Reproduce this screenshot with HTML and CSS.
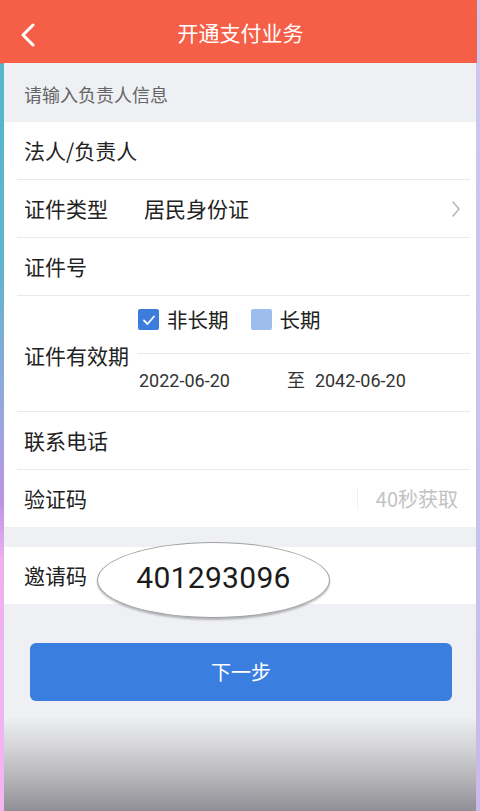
FILE: index.html
```html
<!DOCTYPE html>
<html lang="zh-CN">
<head>
<meta charset="utf-8">
<title>开通支付业务</title>
<link rel="stylesheet" href="styles.css">
</head>
<body>
<div class="frame">
  <div class="edge edge-l"></div>
  <div class="screen">
    <header class="nav">
      <svg class="back" width="16" height="24" viewBox="0 0 16 24"><path d="M13 2 L3 12 L13 22" fill="none" stroke="#fff" stroke-width="3" stroke-linecap="round" stroke-linejoin="round"/></svg>
      <h1 class="title">开通支付业务</h1>
    </header>
    <div class="section-title">请输入负责人信息</div>
    <div class="group">
      <div class="row"><span class="label">法人/负责人</span></div>
      <div class="row">
        <span class="label">证件类型</span>
        <span class="value">居民身份证</span>
        <svg class="chev" width="10" height="18" viewBox="0 0 10 18"><path d="M2 2 L8 9 L2 16" fill="none" stroke="#b8b8b8" stroke-width="1.6" stroke-linecap="round" stroke-linejoin="round"/></svg>
      </div>
      <div class="row"><span class="label">证件号</span></div>
      <div class="row validity">
        <span class="label">证件有效期</span>
        <div class="vcol">
          <div class="vsub checks">
            <span class="opt"><span class="box on"><svg width="20" height="20" viewBox="0 0 20 20"><path d="M5 10.5 L8.5 14 L15 6.5" fill="none" stroke="#fff" stroke-width="1.8" stroke-linecap="round" stroke-linejoin="round"/></svg></span>非长期</span>
            <span class="opt"><span class="box off"></span>长期</span>
          </div>
          <div class="vsub dates">
            <span class="date">2022-06-20</span>
            <span class="to">至</span>
            <span class="date">2042-06-20</span>
          </div>
        </div>
      </div>
      <div class="row"><span class="label">联系电话</span></div>
      <div class="row last">
        <span class="label">验证码</span>
        <span class="sep"></span>
        <span class="code-btn">40秒获取</span>
      </div>
    </div>
    <div class="group invite-group">
      <div class="row last invite">
        <span class="label">邀请码</span>
        <div class="callout">401293096</div>
      </div>
    </div>
    <div class="actions">
      <button class="next">下一步</button>
    </div>
    <div class="fade"></div>
  </div>
  <div class="edge edge-r"></div>
</div>
</body>
</html>
```

FILE: styles.css
```css
* { box-sizing: border-box; }
html, body { margin: 0; padding: 0; }
body {
  width: 480px;
  height: 811px;
  overflow: hidden;
  font-family: "Noto Sans CJK SC", "Noto Sans", sans-serif;
  background: #eef0f4;
}
.frame {
  display: flex;
  width: 480px;
  height: 811px;
}
.edge { width: 4px; flex: none; }
.edge-l {
  background: linear-gradient(to bottom,
    #f55f48 0, #f55f48 63px,
    #54b8c9 64px, #5fb4cc 260px, #9aa6dc 420px, #bb93e2 500px, #eeb0f0 560px, #f3b6f3 811px);
}
.edge-r {
  width: 4px;
  background: linear-gradient(to bottom, #d9c6ea 0, #cbc6ef 120px, #c6c2ee 500px, #c9b8ec 811px);
}
.screen {
  flex: 1;
  display: flex;
  flex-direction: column;
  background: #eef0f4;
  min-width: 0;
}
.nav {
  height: 63px;
  flex: none;
  background: #f55f48;
  display: flex;
  align-items: center;
  justify-content: center;
  position: relative;
  margin-right: -1px;
}
.back {
  position: absolute;
  left: 16px;
  top: 23px;
}
.title {
  margin: 0;
  font-size: 21px;
  font-weight: 400;
  color: #fff;
  line-height: 1;
  padding-top: 2px;
}
.section-title {
  height: 59px;
  flex: none;
  display: flex;
  align-items: center;
  padding-left: 20px;
  padding-top: 3px;
  font-size: 18px;
  color: #666;
}
.group {
  background: #fff;
  padding: 0 6px 0 13px;
  flex: none;
}
.row {
  height: 58px;
  display: flex;
  align-items: center;
  border-bottom: 1px solid #e9e9ec;
  padding-left: 7px;
  font-size: 21px;
  color: #222;
  line-height: 1;
}
.row.last { border-bottom: none; height: 57px; }
.label { flex: none; }
.row .value { margin-left: 36px; }
.chev { margin-left: auto; margin-right: 9px; }
.validity {
  height: 116px;
  padding-left: 0;
  align-items: stretch;
}
.validity .label {
  width: 120px;
  padding-left: 7px;
  display: flex;
  align-items: center;
  padding-top: 4px;
}
.vcol {
  flex: 1;
  display: flex;
  flex-direction: column;
}
.vsub {
  height: 57px;
  display: flex;
  align-items: center;
}
.checks {
  height: 58px;
  border-bottom: 1px solid #e9e9ec;
  padding-left: 1px;
  padding-bottom: 10px;
  gap: 22px;
}
.opt {
  display: flex;
  align-items: center;
  gap: 8px;
  font-size: 20.5px;
}
.box {
  width: 21px;
  height: 21px;
  border-radius: 2px;
  display: flex;
  align-items: center;
  justify-content: center;
}
.box.on { background: #3b7cdc; }
.box.off { background: #9dbdee; }
.dates {
  padding-left: 2px;
  font-family: "Roboto", "Noto Sans CJK SC", sans-serif;
  font-size: 18px;
  color: #333;
  padding-bottom: 3px;
}
.to { margin-left: 57px; font-size: 18px; }
.dates .to + .date { margin-left: 10px; }
.sep {
  margin-left: auto;
  width: 1px;
  height: 22px;
  background: #f0f0f2;
}
.code-btn {
  margin-left: 18px;
  margin-right: 12px;
  color: #c2c2c4;
  font-size: 20px;
}
.invite-group { margin-top: 20px; }
.invite {
  height: 59px;
  position: relative;
}
.callout {
  position: absolute;
  left: 80px;
  top: -5px;
  width: 233px;
  height: 76px;
  border-radius: 50%;
  background: #fff;
  border: 1px solid #a0a0a0;
  box-shadow: 0 2px 2px rgba(0,0,0,0.25);
  display: flex;
  align-items: center;
  justify-content: center;
  font-family: "Roboto", "Noto Sans", sans-serif;
  font-size: 30px;
  color: #1c1c1c;
  letter-spacing: 0.3px;
  padding-bottom: 5px;
  z-index: 2;
}
.actions {
  flex: none;
  padding: 39px 24px 17px 26px;
}
.next {
  display: block;
  width: 100%;
  height: 58px;
  border: none;
  border-radius: 6px;
  background: #3a7fe0;
  color: #fff;
  font-family: "Noto Sans CJK SC", sans-serif;
  font-size: 20px;
  line-height: 1;
  padding: 0;
}
.fade {
  flex: 1;
  background: linear-gradient(to bottom, #eceef1 0, #d6d6da 30%, #b0afb4 70%, #908f95 100%);
}
```
